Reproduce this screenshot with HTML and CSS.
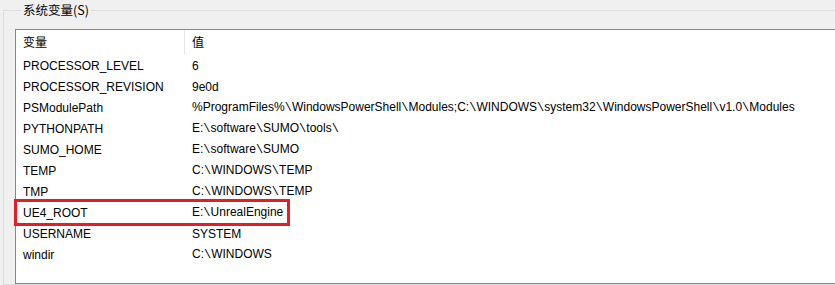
FILE: index.html
```html
<!DOCTYPE html>
<html lang="zh-CN">
<head>
    <meta charset="UTF-8">
    <title>系统变量</title>
    <link rel="stylesheet" href="styles.css">
</head>
<body>

<fieldset class="group">
    <legend class="group-title">系统变量(S)</legend>

    <div class="var-list">
        <div class="list-head">
            <div class="cell name">变量</div>
            <div class="cell value">值</div>
        </div>

        <div class="list-row">
            <div class="cell name">PROCESSOR_LEVEL</div>
            <div class="cell value">6</div>
        </div>
        <div class="list-row">
            <div class="cell name">PROCESSOR_REVISION</div>
            <div class="cell value">9e0d</div>
        </div>
        <div class="list-row">
            <div class="cell name">PSModulePath</div>
            <div class="cell value">%ProgramFiles%<i class="bs">\</i>WindowsPowerShell<i class="bs">\</i>Modules;C:<i class="bs">\</i>WINDOWS<i class="bs">\</i>system32<i class="bs">\</i>WindowsPowerShell<i class="bs">\</i>v1.0<i class="bs">\</i>Modules</div>
        </div>
        <div class="list-row">
            <div class="cell name">PYTHONPATH</div>
            <div class="cell value">E:<i class="bs">\</i>software<i class="bs">\</i>SUMO<i class="bs">\</i>tools<i class="bs">\</i></div>
        </div>
        <div class="list-row">
            <div class="cell name">SUMO_HOME</div>
            <div class="cell value">E:<i class="bs">\</i>software<i class="bs">\</i>SUMO</div>
        </div>
        <div class="list-row">
            <div class="cell name">TEMP</div>
            <div class="cell value">C:<i class="bs">\</i>WINDOWS<i class="bs">\</i>TEMP</div>
        </div>
        <div class="list-row">
            <div class="cell name">TMP</div>
            <div class="cell value">C:<i class="bs">\</i>WINDOWS<i class="bs">\</i>TEMP</div>
        </div>
        <div class="list-row marked">
            <div class="cell name">UE4_ROOT</div>
            <div class="cell value">E:<i class="bs">\</i>UnrealEngine</div>
            <!-- red highlight box drawn over the row -->
            <span class="highlight"></span>
        </div>
        <div class="list-row">
            <div class="cell name">USERNAME</div>
            <div class="cell value">SYSTEM</div>
        </div>
        <div class="list-row">
            <div class="cell name">windir</div>
            <div class="cell value">C:<i class="bs">\</i>WINDOWS</div>
        </div>
    </div>
</fieldset>

</body>
</html>
```

FILE: styles.css
```css
body {
    margin: 0;
    background-color: #f0f0f0;
    font-family: "Liberation Sans", Arial, "Noto Sans CJK SC", sans-serif;
    font-size: 12px;
    color: #000;
    overflow: hidden;
    width: 835px;
    height: 285px;
}

.group {
    margin: 0 0 0 3px;
    padding: 9px 0 0 11px;
    border: 1px solid #dcdcdc;
    width: 900px;
    box-sizing: border-box;
}

.group-title {
    margin-left: 6px;
    padding: 0 2px;
    line-height: 20px;
    font-family: "Noto Sans CJK SC", "Liberation Sans", sans-serif;
    font-size: 12.5px;
    color: #000;
}

.var-list {
    background-color: #fff;
    border: 1px solid #828790;
    border-right: none;
    height: 255px;
    box-sizing: border-box;
}

.list-head,
.list-row {
    display: grid;
    grid-template-columns: 169px 1fr;
    align-items: center;
}

.list-head {
    height: 24px;
}

.list-head .name {
    border-right: 1px solid #e5e5e5;
    height: 23px;
    display: flex;
    align-items: center;
}

.list-head .cell {
    font-family: "Noto Sans CJK SC", "Liberation Sans", sans-serif;
    padding-bottom: 1px;
}

.list-row {
    height: 21px;
    position: relative;
}

.list-row .cell {
    padding-top: 2px;
}

.cell {
    padding-left: 7px;
    white-space: nowrap;
}

/* backslashes are wider in the original UI font */
.bs {
    font-style: normal;
    font-family: "Liberation Mono", monospace;
}

.highlight {
    position: absolute;
    left: -2px;
    top: -2px;
    width: 276px;
    height: 27px;
    border: 3px solid #e81c24;
    box-sizing: border-box;
}
```
